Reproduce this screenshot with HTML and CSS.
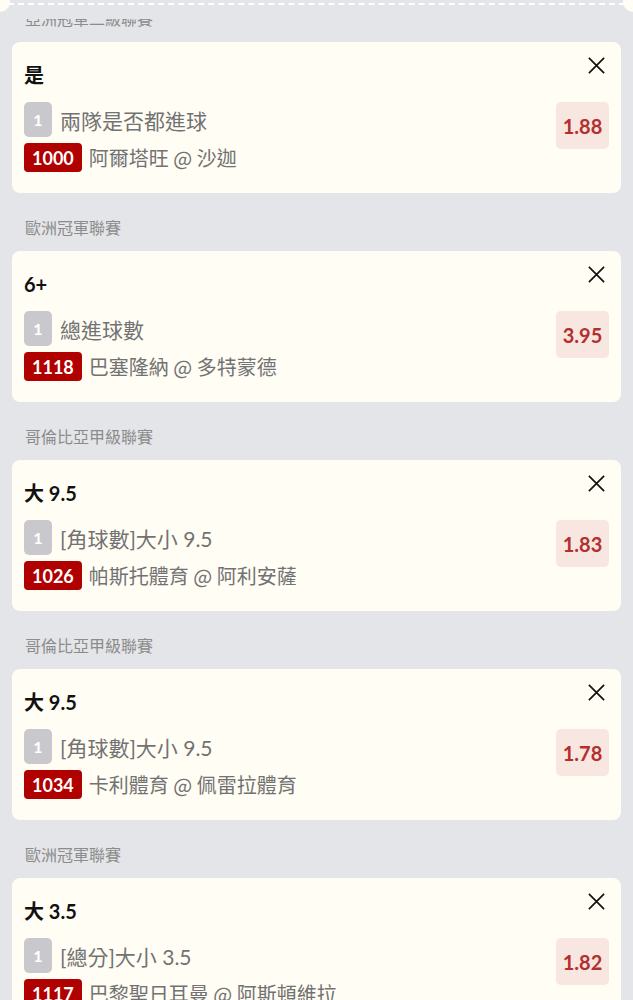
FILE: index.html
```html
<!DOCTYPE html>
<html>
<head>
  <title>投注單</title>
  <meta name="viewport" content="width=device-width, initial-scale=1">
  <link rel="stylesheet" href="styles.css">
</head>
<body>
  <div class="ticket-edge">
    <span class="notch notch-left"></span>
    <span class="notch notch-right"></span>
  </div>

  <div class="bet-list">
    <div class="league">亞洲冠軍二級聯賽</div>
    <div class="bet-card">
      <div class="bet-main">
        <div class="bet-pick">是</div>
        <div class="bet-row">
          <span class="leg-no">1</span>
          <span class="market">兩隊是否都進球</span>
        </div>
        <div class="bet-row">
          <span class="match-no">1000</span>
          <span class="teams">阿爾塔旺 @ 沙迦</span>
        </div>
      </div>
      <div class="bet-side">
        <svg class="close" viewBox="0 0 20 20"><path d="M2 2 L18 18 M18 2 L2 18"/></svg>
        <div class="odds">1.88</div>
      </div>
    </div>

    <div class="league">歐洲冠軍聯賽</div>
    <div class="bet-card">
      <div class="bet-main">
        <div class="bet-pick">6+</div>
        <div class="bet-row">
          <span class="leg-no">1</span>
          <span class="market">總進球數</span>
        </div>
        <div class="bet-row">
          <span class="match-no">1118</span>
          <span class="teams">巴塞隆納 @ 多特蒙德</span>
        </div>
      </div>
      <div class="bet-side">
        <svg class="close" viewBox="0 0 20 20"><path d="M2 2 L18 18 M18 2 L2 18"/></svg>
        <div class="odds">3.95</div>
      </div>
    </div>

    <div class="league">哥倫比亞甲級聯賽</div>
    <div class="bet-card">
      <div class="bet-main">
        <div class="bet-pick">大 9.5</div>
        <div class="bet-row">
          <span class="leg-no">1</span>
          <span class="market">[角球數]大小 9.5</span>
        </div>
        <div class="bet-row">
          <span class="match-no">1026</span>
          <span class="teams">帕斯托體育 @ 阿利安薩</span>
        </div>
      </div>
      <div class="bet-side">
        <svg class="close" viewBox="0 0 20 20"><path d="M2 2 L18 18 M18 2 L2 18"/></svg>
        <div class="odds">1.83</div>
      </div>
    </div>

    <div class="league">哥倫比亞甲級聯賽</div>
    <div class="bet-card">
      <div class="bet-main">
        <div class="bet-pick">大 9.5</div>
        <div class="bet-row">
          <span class="leg-no">1</span>
          <span class="market">[角球數]大小 9.5</span>
        </div>
        <div class="bet-row">
          <span class="match-no">1034</span>
          <span class="teams">卡利體育 @ 佩雷拉體育</span>
        </div>
      </div>
      <div class="bet-side">
        <svg class="close" viewBox="0 0 20 20"><path d="M2 2 L18 18 M18 2 L2 18"/></svg>
        <div class="odds">1.78</div>
      </div>
    </div>

    <div class="league">歐洲冠軍聯賽</div>
    <div class="bet-card">
      <div class="bet-main">
        <div class="bet-pick">大 3.5</div>
        <div class="bet-row">
          <span class="leg-no">1</span>
          <span class="market">[總分]大小 3.5</span>
        </div>
        <div class="bet-row">
          <span class="match-no">1117</span>
          <span class="teams">巴黎聖日耳曼 @ 阿斯頓維拉</span>
        </div>
      </div>
      <div class="bet-side">
        <svg class="close" viewBox="0 0 20 20"><path d="M2 2 L18 18 M18 2 L2 18"/></svg>
        <div class="odds">1.82</div>
      </div>
    </div>
  </div>
</body>
</html>
```

FILE: styles.css
```css
body {
  margin: 0;
  background-color: #e4e5e8;
  font-family: Lato, "Noto Sans CJK TC", sans-serif;
  overflow: hidden;
}
/* Top edge of the ticket, sits over the scrolled list */
.ticket-edge {
  position: absolute;
  top: 0;
  left: 0;
  right: 0;
  height: 19px;
  background-color: #e4e5e8;
  z-index: 2;
}
.ticket-edge::after {
  content: "";
  position: absolute;
  left: 8px;
  right: 8px;
  top: 3px;
  border-top: 2px dashed #ffffff;
}
.notch {
  position: absolute;
  top: -8px;
  width: 20px;
  height: 20px;
  border-radius: 50%;
  background-color: #fffdf4;
}
.notch-left { left: -10px; }
.notch-right { right: -10px; }

.bet-list {
  padding-top: 8px;
}
.league {
  margin: 24px 0 12px 25px;
  line-height: 22px;
  font-size: 16px;
  color: #8c8c8c;
}
.bet-list .league:first-child {
  margin-top: 0;
}
/* Card */
.bet-card {
  display: flex;
  margin: 0 12px;
  padding: 18px 12px 21px 12px;
  background-color: #fffdf4;
  border-radius: 8px;
}
.bet-main {
  flex: 1;
}
.bet-pick {
  line-height: 30px;
  font-size: 20px;
  font-weight: 700;
  color: #111;
}
.bet-row {
  display: flex;
  align-items: center;
  margin-top: 6px;
}
.bet-pick + .bet-row {
  margin-top: 12px;
}
.leg-no {
  display: flex;
  align-items: center;
  justify-content: center;
  width: 28px;
  height: 35px;
  margin-right: 8px;
  border-radius: 5px;
  background-color: #c9c9cd;
  color: #fff;
  font-size: 16px;
  font-weight: 700;
}
.market {
  font-size: 21px;
  color: #727272;
}
.match-no {
  display: flex;
  align-items: center;
  justify-content: center;
  height: 29px;
  padding: 0 8px;
  margin-right: 7px;
  border-radius: 4px;
  background-color: #b00000;
  color: #fff;
  font-size: 18px;
  font-weight: 700;
}
.teams {
  font-family: "Noto Sans CJK TC", sans-serif;
  font-size: 20px;
  color: #727272;
}
.bet-side {
  display: flex;
  flex-direction: column;
  align-items: flex-end;
}
.close {
  width: 19px;
  height: 19px;
  margin: -4px 3px 0 0;
  fill: none;
  stroke: #111;
  stroke-width: 1.8;
}
.odds {
  display: flex;
  align-items: center;
  justify-content: center;
  width: 53px;
  height: 47px;
  margin-top: 27px;
  border-radius: 5px;
  background-color: #f8e6e0;
  color: #b3302e;
  font-size: 20px;
  font-weight: 700;
}
```
